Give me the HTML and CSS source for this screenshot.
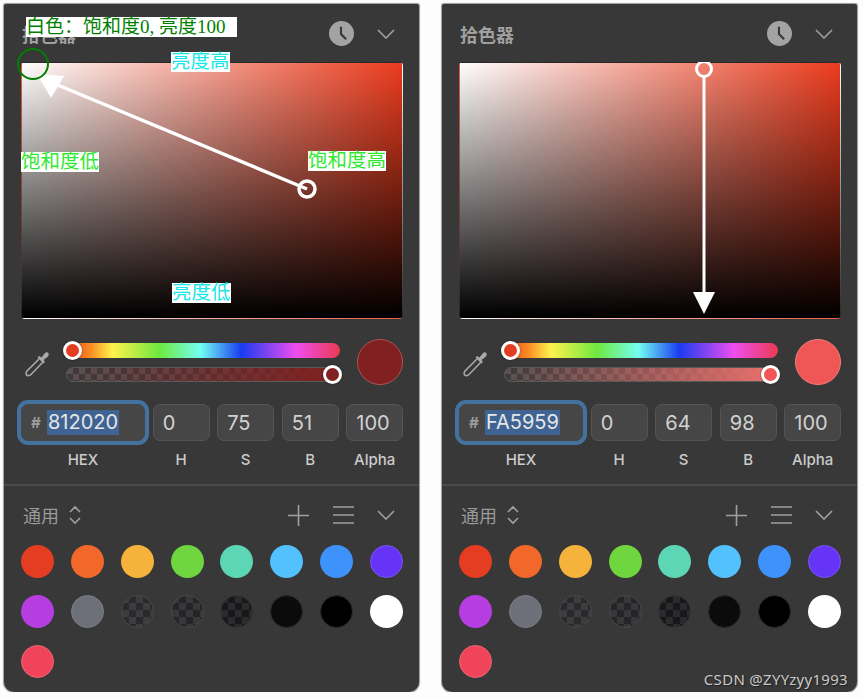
FILE: index.html
```html
<!DOCTYPE html>
<html lang="zh-CN">
<head>
	<meta charset="UTF-8">
	<title>拾色器</title>
	<link rel="stylesheet" href="styles.css">
</head>
<body>
<div id="wrap">
	<!-- 左：饱和度 / 亮度说明 -->
	<div class="panel panel-dark">
		<div class="head">
			<span class="title">拾色器</span>
			<svg class="clock" viewBox="0 0 24 24"><circle cx="12" cy="12" r="12" fill="#a3a3a3"/><path d="M11.5 5.5V12.5L16.5 17.5" fill="none" stroke="#383838" stroke-width="2"/></svg>
			<svg class="chev" viewBox="0 0 18 10"><path d="M1 1L9 9L17 1" fill="none" stroke="#a0a0a0" stroke-width="1.6"/></svg>
		</div>
		<div class="picker">
			<svg class="arrow" viewBox="0 0 382 257">
				<path d="M286 127L32 21" fill="none" stroke="#fff" stroke-width="3.5"/>
				<path d="M16 12L43 14L30 36Z" fill="#fff"/>
				<circle cx="286" cy="127" r="8" fill="none" stroke="#fff" stroke-width="3.5"/>
			</svg>
		</div>
		<div class="controls">
			<svg class="dropper" viewBox="0 0 26 26"><path d="M15 8L3 20C1.5 22 2 24 3.500 24.500C5 25 6 24.500 7 23.500L19 11" fill="none" stroke="#a8a8a8" stroke-width="1.600"/><path d="M13.500 6.500L19.500 12.500L21 11L19.500 9L24 5.500C26 3 23.500 0 21 2L17.500 6.500L15 5Z" fill="#a8a8a8"/></svg>
			<div class="sliders">
				<div class="hue"><span class="thumb thumb-hue"></span></div>
				<div class="alpha"><span class="thumb thumb-alpha"></span></div>
			</div>
			<div class="current"></div>
		</div>
		<div class="fields">
			<div class="field hex"><span class="sharp">#</span><span class="sel">812020</span></div>
			<div class="field">0</div>
			<div class="field">75</div>
			<div class="field">51</div>
			<div class="field">100</div>
		</div>
		<div class="labels">
			<span class="hex-label">HEX</span><span>H</span><span>S</span><span>B</span><span>Alpha</span>
		</div>
		<div class="line"></div>
		<div class="common">
			<span class="common-name">通用</span>
			<svg class="updown" viewBox="0 0 12 20"><path d="M1 7L6 2L11 7M1 13L6 18L11 13" fill="none" stroke="#a0a0a0" stroke-width="1.600"/></svg>
			<svg class="plus" viewBox="0 0 21 21"><path d="M10.500 0V21M0 10.500H21" stroke="#a0a0a0" stroke-width="1.600"/></svg>
			<svg class="menu" viewBox="0 0 21 18"><path d="M0 1H21M0 9H21M0 17H21" stroke="#a0a0a0" stroke-width="1.600"/></svg>
			<svg class="chev" viewBox="0 0 18 10"><path d="M1 1L9 9L17 1" fill="none" stroke="#a0a0a0" stroke-width="1.600"/></svg>
		</div>
		<ul class="swatches">
			<li class="c-red"></li><li class="c-orange"></li><li class="c-yellow"></li><li class="c-green"></li>
			<li class="c-teal"></li><li class="c-sky"></li><li class="c-blue"></li><li class="c-violet"></li>
			<li class="c-purple"></li><li class="c-gray"></li><li class="c-check1"></li><li class="c-check2"></li>
			<li class="c-check3"></li><li class="c-check4"></li><li class="c-black"></li><li class="c-white"></li>
			<li class="c-pink"></li>
		</ul>
		<!-- 标注 -->
		<span class="note note-white">白色：饱和度0, 亮度100</span>
		<span class="note note-high">亮度高</span>
		<span class="note note-low">亮度低</span>
		<span class="note note-sleft">饱和度低</span>
		<span class="note note-sright">饱和度高</span>
		<span class="ring"></span>
	</div>

	<!-- 右：亮度不变 -->
	<div class="panel panel-light">
		<div class="head">
			<span class="title">拾色器</span>
			<svg class="clock" viewBox="0 0 24 24"><circle cx="12" cy="12" r="12" fill="#a3a3a3"/><path d="M11.500 5.500V12.500L16.500 17.500" fill="none" stroke="#383838" stroke-width="2"/></svg>
			<svg class="chev" viewBox="0 0 18 10"><path d="M1 1L9 9L17 1" fill="none" stroke="#a0a0a0" stroke-width="1.600"/></svg>
		</div>
		<div class="picker">
			<svg class="arrow" viewBox="0 0 382 257">
				<path d="M245 15V235" fill="none" stroke="#fff" stroke-width="3"/>
				<path d="M234 230H256L245 252Z" fill="#fff"/>
				<circle cx="245" cy="7" r="7.500" fill="none" stroke="#fff" stroke-width="3"/>
			</svg>
		</div>
		<div class="controls">
			<svg class="dropper" viewBox="0 0 26 26"><path d="M15 8L3 20C1.500 22 2 24 3.500 24.500C5 25 6 24.500 7 23.500L19 11" fill="none" stroke="#a8a8a8" stroke-width="1.600"/><path d="M13.500 6.500L19.500 12.500L21 11L19.500 9L24 5.500C26 3 23.500 0 21 2L17.500 6.500L15 5Z" fill="#a8a8a8"/></svg>
			<div class="sliders">
				<div class="hue"><span class="thumb thumb-hue"></span></div>
				<div class="alpha"><span class="thumb thumb-alpha"></span></div>
			</div>
			<div class="current"></div>
		</div>
		<div class="fields">
			<div class="field hex"><span class="sharp">#</span><span class="sel">FA5959</span></div>
			<div class="field">0</div>
			<div class="field">64</div>
			<div class="field">98</div>
			<div class="field">100</div>
		</div>
		<div class="labels">
			<span class="hex-label">HEX</span><span>H</span><span>S</span><span>B</span><span>Alpha</span>
		</div>
		<div class="line"></div>
		<div class="common">
			<span class="common-name">通用</span>
			<svg class="updown" viewBox="0 0 12 20"><path d="M1 7L6 2L11 7M1 13L6 18L11 13" fill="none" stroke="#a0a0a0" stroke-width="1.600"/></svg>
			<svg class="plus" viewBox="0 0 21 21"><path d="M10.500 0V21M0 10.500H21" stroke="#a0a0a0" stroke-width="1.600"/></svg>
			<svg class="menu" viewBox="0 0 21 18"><path d="M0 1H21M0 9H21M0 17H21" stroke="#a0a0a0" stroke-width="1.600"/></svg>
			<svg class="chev" viewBox="0 0 18 10"><path d="M1 1L9 9L17 1" fill="none" stroke="#a0a0a0" stroke-width="1.600"/></svg>
		</div>
		<ul class="swatches">
			<li class="c-red"></li><li class="c-orange"></li><li class="c-yellow"></li><li class="c-green"></li>
			<li class="c-teal"></li><li class="c-sky"></li><li class="c-blue"></li><li class="c-violet"></li>
			<li class="c-purple"></li><li class="c-gray"></li><li class="c-check1"></li><li class="c-check2"></li>
			<li class="c-check3"></li><li class="c-check4"></li><li class="c-black"></li><li class="c-white"></li>
			<li class="c-pink"></li>
		</ul>
		<span class="mark">CSDN @ZYYzyy1993</span>
	</div>
</div>
</body>
</html>
```

FILE: styles.css
```css
*{margin: 0;padding: 0;box-sizing: border-box;}
ul{list-style: none;}
body{
	background: #fdfdfd;
	font-family: "Inter","Noto Sans CJK SC",sans-serif;
	overflow: hidden;
}
#wrap{
	display: flex;
	gap: 23px;
	padding: 4px 0 0 4px;
}
.panel{
	position: relative;
	width: 415px;
	height: 688px;
	padding: 0 16px 0 17px;
	background: #383838;
	border-radius: 2px 2px 10px 10px;
	box-shadow: 0 0 1px 1px #999;
}
.panel-dark{
	--cur: #812020;
	--cur-edge: #b25252;
	--alpha-end: #812020;
}
.panel-light{
	--cur: #f05656;
	--cur-edge: #f57d7d;
	--alpha-end: #e8706c;
}

/* 头部 */
.head{
	display: flex;
	align-items: center;
	height: 58px;
	padding-top: 1px;
}
.title{
	font: bold 18px "Noto Sans CJK SC",sans-serif;
	color: #a0a0a0;
	margin-left: 1px;
	margin-right: auto;
}
.clock{
	width: 25px;
	height: 25px;
}
.chev{
	width: 18px;
	height: 10px;
	margin-left: 23px;
	margin-right: 8px;
}

/* 色板 */
.picker{
	position: relative;
	height: 257px;
	border-radius: 4px;
	border: 1px solid rgba(255,255,255,.16);
	background: linear-gradient(to top,#000,rgba(0,0,0,0)),linear-gradient(to right,#fff,#ec3c1e);
}
.arrow{
	position: absolute;
	top: -1px;
	left: -1px;
	width: 382px;
	height: 257px;
}

/* 滑块 */
.controls{
	display: flex;
	align-items: center;
	height: 46px;
	margin-top: 20px;
}
.dropper{
	width: 26px;
	height: 26px;
	margin: 3px 0 0 3px;
}
.sliders{
	width: 274px;
	margin-left: 16px;
	display: flex;
	flex-direction: column;
	gap: 9px;
}
.hue,.alpha{
	position: relative;
	height: 15px;
	border-radius: 8px;
}
.hue{
	background: linear-gradient(to right,#e8401f 0%,#f98d24 9%,#fff24d 17%,#6fe83f 34%,#72fff2 49%,#1a3cf0 64%,#f04df0 84%,#ea3a50 100%);
}
.alpha{
	border: 1px solid #5a5a5a;
	background: linear-gradient(to right,rgba(0,0,0,0),var(--alpha-end) 98%),repeating-conic-gradient(#3b3b3b 0 25%,#5a5052 0 50%) 0 0/12px 12px;
}
.thumb{
	position: absolute;
	top: 50%;
	width: 19px;
	height: 19px;
	margin-top: -9.5px;
	border-radius: 50%;
	border: 3.5px solid #fff;
	box-shadow: 0 0 2px rgba(0,0,0,.5);
}
.thumb-hue{
	left: -3px;
	background: #e43d22;
}
.thumb-alpha{
	right: -3px;
	background: var(--cur);
}
.current{
	width: 46px;
	height: 46px;
	margin-left: auto;
	border-radius: 50%;
	background: var(--cur);
	border: 1px solid var(--cur-edge);
}

/* 输入框 */
.fields{
	display: flex;
	gap: 7.75px;
	height: 37px;
	margin-top: 19px;
}
.field{
	flex: 1;
	display: flex;
	align-items: center;
	padding-left: 9px;
	background: #464646;
	border: 1px solid #555;
	border-radius: 7px;
	font-size: 20px;
	color: #d2d2d2;
}
.hex{
	flex: none;
	width: 124px;
	border-color: #464646;
	box-shadow: 0 0 0 4px #44729f;
}
.sharp{
	width: 16px;
	font-size: 15px;
	font-weight: 700;
	color: #9c9c9c;
}
.sel{
	padding: 0 1px;
	line-height: 25px;
	background: #3f6493;
	color: #e6e6e6;
}
.labels{
	display: flex;
	gap: 7.75px;
	margin-top: 9px;
	font-size: 15px;
	line-height: 20px;
	font-weight: 500;
	color: #cbcbcb;
}
.labels span{
	flex: 1;
	text-align: center;
}
.labels .hex-label{
	flex: none;
	width: 124px;
}
.line{
	height: 2px;
	margin: 14px -16px 0 -17px;
	background: #4a4a4a;
}

/* 通用 */
.common{
	display: flex;
	align-items: center;
	height: 58px;
	padding-left: 2px;
}
.common-name{
	font: 18px "Noto Sans CJK SC",sans-serif;
	color: #9a9a9a;
}
.updown{
	width: 12px;
	height: 20px;
	margin-left: 10px;
	margin-right: auto;
}
.plus{
	width: 21px;
	height: 21px;
}
.menu{
	width: 21px;
	height: 18px;
	margin-left: 24px;
}
.swatches{
	display: grid;
	grid-template-columns: repeat(8,33px);
	justify-content: space-between;
	row-gap: 17px;
	margin-top: 1px;
}
.swatches li{
	width: 33px;
	height: 33px;
	border-radius: 50%;
}
.c-red{background: #e43d22;}
.c-orange{background: #f2682a;}
.c-yellow{background: #f6b33c;}
.c-green{background: #6fd63f;}
.c-teal{background: #5dd6b5;}
.c-sky{background: #52c1fd;}
.c-blue{background: #3e92fb;}
.c-violet{background: #6534f7;border: 1px solid #7b55f5;}
.c-purple{background: #b63ee0;}
.c-gray{background: #6d7078;border: 1px solid #7c7f86;}
.c-check1,.c-check2,.c-check3{background: repeating-conic-gradient(#2a2a2e 0 25%,#3d3d3d 0 50%) 0 0/14px 14px;border: 1px solid #484848;}
.c-check2{background-image: repeating-conic-gradient(#252529 0 25%,#383838 0 50%);}
.c-check3{background-image: repeating-conic-gradient(#18181b 0 25%,#2b2b2d 0 50%);border-color: #333;}
.c-check4{background: #0b0b0c;border: 1px solid #2a2a2a;}
.c-black{background: #000;border: 1px solid #2a2a2a;}
.c-white{background: #fff;}
.c-pink{background: #ef4459;border: 1px solid #f26577;}

/* 标注 */
.note{
	position: absolute;
	background: #fff;
	font: 19.5px/20px "Liberation Serif","Noto Sans CJK SC",serif;
	white-space: nowrap;
}
.note-white{
	top: 13px;
	left: 22px;
	width: 211px;
	font-size: 19px;
	color: #008000;
}
.note-high{
	top: 48px;
	left: 167px;
	color: #19e6e6;
}
.note-low{
	top: 279px;
	left: 168px;
	color: #19e6e6;
}
.note-sleft{
	top: 148px;
	left: 17px;
	color: #2fe82f;
}
.note-sright{
	top: 147px;
	left: 304px;
	color: #2fe82f;
}
.ring{
	position: absolute;
	top: 44px;
	left: 13px;
	width: 32px;
	height: 32px;
	border: 2.5px solid #008000;
	border-radius: 50%;
}
.mark{
	position: absolute;
	right: 9px;
	bottom: 3px;
	font: 15px "Noto Sans",sans-serif;
	letter-spacing: .3px;
	color: #c8c8c8;
	text-shadow: 1px 1px 1px #222;
}
```
